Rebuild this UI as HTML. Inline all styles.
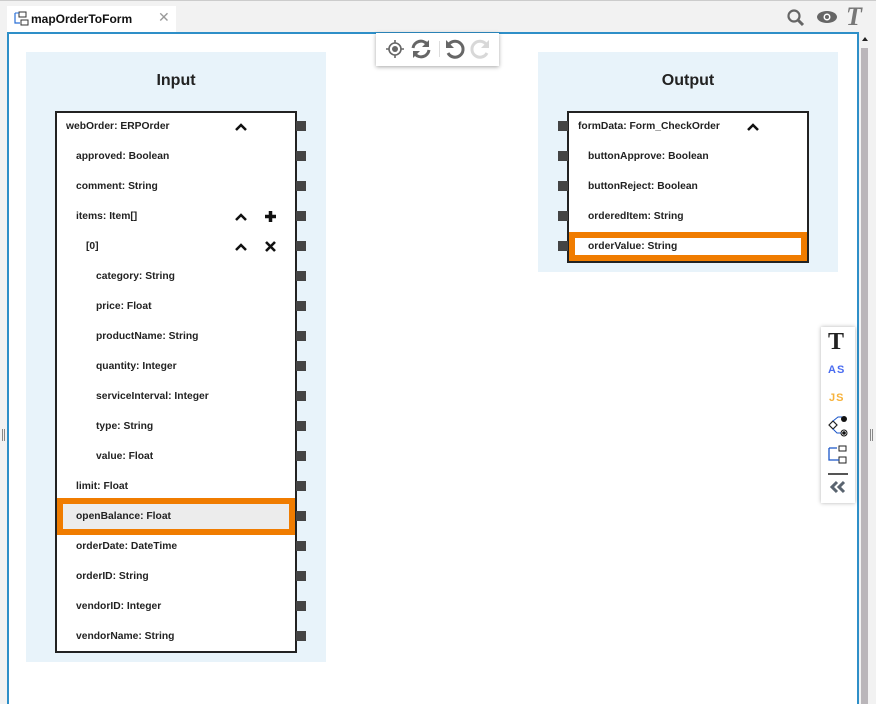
<!DOCTYPE html>
<html style="height:704px;overflow:hidden"><head><style>
*{margin:0;padding:0;box-sizing:border-box}
body{width:876px;height:704px;background:#f2f2f2;position:relative;overflow:hidden;font-family:"Liberation Sans",sans-serif;}
.abs{position:absolute}
.row{position:absolute;height:30px;line-height:32px;font-size:10.3px;font-weight:bold;color:#222;white-space:nowrap}
.port{position:absolute;width:10px;height:10px;background:#444}
</style></head><body>
<div class="abs" style="left:0;top:0;width:876px;height:1px;background:#ccc"></div>
<div class="abs" style="left:7px;top:6px;width:169px;height:27px;background:#fff"></div>
<svg class="abs" style="left:13px;top:11px" width="16" height="16" viewBox="0 0 16 16"><rect x="6" y="1" width="7" height="5" fill="#fff" stroke="#333"/><rect x="8" y="9" width="7" height="5" fill="#fff" stroke="#333"/><path d="M2 2v10h5" fill="none" stroke="#2a6fd6" stroke-width="1.2"/><path d="M2 2h4" stroke="#2a6fd6"/></svg>
<div class="abs" style="left:31px;top:12px;font-size:12px;font-weight:bold;color:#111">mapOrderToForm</div>
<div class="abs" style="left:158px;top:9px;font-size:14px;color:#999">✕</div>
<svg class="abs" style="left:786px;top:8px" width="20" height="20" viewBox="0 0 20 20"><circle cx="8" cy="8" r="5.5" fill="none" stroke="#666" stroke-width="2.2"/><path d="M12 12l5 5" stroke="#666" stroke-width="3"/></svg>
<svg class="abs" style="left:816px;top:10px" width="22" height="14" viewBox="0 0 22 14"><ellipse cx="11" cy="7" rx="10" ry="6" fill="#666"/><circle cx="11" cy="7" r="3.5" fill="#fff"/><circle cx="11" cy="7" r="2" fill="#666"/></svg>
<div class="abs" style="left:846px;top:2px;font-family:'Liberation Serif',serif;font-style:italic;font-weight:bold;font-size:26px;color:#777">T</div>
<div class="abs" style="left:7px;top:32px;width:852px;height:672px;background:#fff;border:2px solid #2e8fc8;border-bottom:none"></div>
<div class="abs" style="left:859px;top:34px;width:17px;height:670px;background:#f2f2f2"></div>
<div class="abs" style="left:861px;top:48px;width:7px;height:656px;background:#bab6ba"></div>
<div class="abs" style="left:862px;top:37px;width:0;height:0;border-left:3px solid transparent;border-right:3px solid transparent;border-bottom:4px solid #222"></div>
<div class="abs" style="left:2px;top:429px;width:1px;height:12px;background:#888"></div><div class="abs" style="left:4px;top:429px;width:1px;height:12px;background:#888"></div>
<div class="abs" style="left:870px;top:429px;width:1px;height:12px;background:#888"></div><div class="abs" style="left:872px;top:429px;width:1px;height:12px;background:#888"></div>
<div class="abs" style="left:376px;top:33px;width:123px;height:33px;background:#fff;box-shadow:0 1px 4px rgba(0,0,0,.35)"></div>
<svg class="abs" style="left:385px;top:39px" width="20" height="20" viewBox="0 0 20 20"><circle cx="10" cy="10" r="6" fill="none" stroke="#666" stroke-width="1.6"/><circle cx="10" cy="10" r="3" fill="#666"/><path d="M10 1v3M10 16v3M1 10h3M16 10h3" stroke="#666" stroke-width="1.6"/></svg>
<svg class="abs" style="left:410px;top:38px" width="22" height="22" viewBox="0 0 22 22"><path d="M3 10a8 8 0 0 1 14-4" fill="none" stroke="#666" stroke-width="3"/><path d="M19 2v7h-7z" fill="#666"/><path d="M19 12a8 8 0 0 1-14 4" fill="none" stroke="#666" stroke-width="3"/><path d="M3 20v-7h7z" fill="#666"/></svg>
<div class="abs" style="left:439px;top:41px;width:1px;height:16px;background:#ddd"></div>
<svg class="abs" style="left:444px;top:38px" width="22" height="22" viewBox="0 0 22 22"><path d="M5 6a8 8 0 1 1-1 9" fill="none" stroke="#666" stroke-width="3"/><path d="M2 2v8h8z" fill="#666"/></svg>
<svg class="abs" style="left:469px;top:38px" width="22" height="22" viewBox="0 0 22 22"><path d="M17 6a8 8 0 1 0 1 9" fill="none" stroke="#d8d8d8" stroke-width="3"/><path d="M20 2v8h-8z" fill="#d8d8d8"/></svg>
<div class="abs" style="left:26px;top:52px;width:300px;height:610px;background:#e8f3fa"></div>
<div class="abs" style="left:26px;top:72px;width:300px;text-align:center;font-size:16px;font-weight:bold;color:#222">Input</div>
<div class="abs" style="left:55px;top:111px;width:242px;height:542px;background:#fff;border:2px solid #222"></div>
<div class="abs" style="left:57px;top:498px;width:238px;height:37px;background:#ececec;border:6px solid #f07c00"></div>
<div class="row" style="left:66px;top:111px">webOrder: ERPOrder</div>
<div class="row" style="left:76px;top:141px">approved: Boolean</div>
<div class="row" style="left:76px;top:171px">comment: String</div>
<div class="row" style="left:76px;top:201px">items: Item[]</div>
<div class="row" style="left:86px;top:231px">[0]</div>
<div class="row" style="left:96px;top:261px">category: String</div>
<div class="row" style="left:96px;top:291px">price: Float</div>
<div class="row" style="left:96px;top:321px">productName: String</div>
<div class="row" style="left:96px;top:351px">quantity: Integer</div>
<div class="row" style="left:96px;top:381px">serviceInterval: Integer</div>
<div class="row" style="left:96px;top:411px">type: String</div>
<div class="row" style="left:96px;top:441px">value: Float</div>
<div class="row" style="left:76px;top:471px">limit: Float</div>
<div class="row" style="left:76px;top:501px">openBalance: Float</div>
<div class="row" style="left:76px;top:531px">orderDate: DateTime</div>
<div class="row" style="left:76px;top:561px">orderID: String</div>
<div class="row" style="left:76px;top:591px">vendorID: Integer</div>
<div class="row" style="left:76px;top:621px">vendorName: String</div>
<svg class="abs" style="left:235px;top:123px" width="12" height="8"><path d="M1 7l5-5 5 5" fill="none" stroke="#111" stroke-width="2.5"/></svg>
<svg class="abs" style="left:235px;top:213px" width="12" height="8"><path d="M1 7l5-5 5 5" fill="none" stroke="#111" stroke-width="2.5"/></svg>
<svg class="abs" style="left:235px;top:243px" width="12" height="8"><path d="M1 7l5-5 5 5" fill="none" stroke="#111" stroke-width="2.5"/></svg>
<svg class="abs" style="left:265px;top:211px" width="11" height="11"><path d="M5.5 0v11M0 5.5h11" stroke="#111" stroke-width="3.5"/></svg>
<svg class="abs" style="left:265px;top:241px" width="11" height="11"><path d="M1 1l9 9M10 1l-9 9" stroke="#111" stroke-width="2.6"/></svg>
<div class="abs" style="left:538px;top:52px;width:300px;height:220px;background:#e8f3fa"></div>
<div class="abs" style="left:538px;top:72px;width:300px;text-align:center;font-size:16px;font-weight:bold;color:#222">Output</div>
<div class="abs" style="left:567px;top:111px;width:242px;height:152px;background:#fff;border:2px solid #222"></div>
<div class="abs" style="left:569px;top:232px;width:238px;height:29px;background:#fff;border:6px solid #f07c00"></div>
<div class="row" style="left:578px;top:111px">formData: Form_CheckOrder</div>
<div class="row" style="left:588px;top:141px">buttonApprove: Boolean</div>
<div class="row" style="left:588px;top:171px">buttonReject: Boolean</div>
<div class="row" style="left:588px;top:201px">orderedItem: String</div>
<div class="row" style="left:588px;top:231px">orderValue: String</div>
<svg class="abs" style="left:747px;top:123px" width="12" height="8"><path d="M1 7l5-5 5 5" fill="none" stroke="#111" stroke-width="2.5"/></svg>
<div class="port" style="left:296px;top:121px"></div><div class="port" style="left:296px;top:151px"></div><div class="port" style="left:296px;top:181px"></div><div class="port" style="left:296px;top:211px"></div><div class="port" style="left:296px;top:241px"></div><div class="port" style="left:296px;top:271px"></div><div class="port" style="left:296px;top:301px"></div><div class="port" style="left:296px;top:331px"></div><div class="port" style="left:296px;top:361px"></div><div class="port" style="left:296px;top:391px"></div><div class="port" style="left:296px;top:421px"></div><div class="port" style="left:296px;top:451px"></div><div class="port" style="left:296px;top:481px"></div><div class="port" style="left:296px;top:511px"></div><div class="port" style="left:296px;top:541px"></div><div class="port" style="left:296px;top:571px"></div><div class="port" style="left:296px;top:601px"></div><div class="port" style="left:296px;top:631px"></div>
<div class="port" style="left:558px;top:121px"></div><div class="port" style="left:558px;top:151px"></div><div class="port" style="left:558px;top:181px"></div><div class="port" style="left:558px;top:211px"></div><div class="port" style="left:558px;top:241px"></div>
<div class="abs" style="left:821px;top:327px;width:34px;height:176px;background:#fff;box-shadow:0 0 4px rgba(0,0,0,.3)"></div>
<div class="abs" style="left:828px;top:329px;font-family:'Liberation Serif',serif;font-weight:bold;font-size:24px;color:#222">T</div>
<div class="abs" style="left:828px;top:364px;font-size:11px;font-weight:bold;color:#4a6cf0;letter-spacing:1px">AS</div>
<div class="abs" style="left:829px;top:392px;font-size:11px;font-weight:bold;color:#f7b23b;letter-spacing:1px">JS</div>
<svg class="abs" style="left:827px;top:415px" width="24" height="24" viewBox="0 0 24 24"><path d="M2 10l4-4 4 4-4 4z" fill="#fff" stroke="#222" stroke-width="1.2"/><path d="M6 6l5-4h6M6 14l4 4h6" fill="none" stroke="#1a56c8" stroke-width="1"/><circle cx="17" cy="4" r="3" fill="#111"/><circle cx="17" cy="18" r="3" fill="#fff" stroke="#111"/><circle cx="17" cy="18" r="1.8" fill="#111"/></svg>
<svg class="abs" style="left:827px;top:444px" width="22" height="22" viewBox="0 0 22 22"><rect x="12" y="2" width="7" height="5" fill="#fff" stroke="#222"/><rect x="12" y="13" width="7" height="6" fill="#fff" stroke="#222"/><path d="M2 4v12h10M2 4h8" fill="none" stroke="#1a56c8" stroke-width="1.3"/></svg>
<div class="abs" style="left:828px;top:473px;width:20px;height:2px;background:#555"></div>
<svg class="abs" style="left:829px;top:480px" width="18" height="14" viewBox="0 0 18 14"><path d="M8 2L3 7l5 5M15 2l-5 5 5 5" fill="none" stroke="#5a6470" stroke-width="3"/></svg>
</body></html>
